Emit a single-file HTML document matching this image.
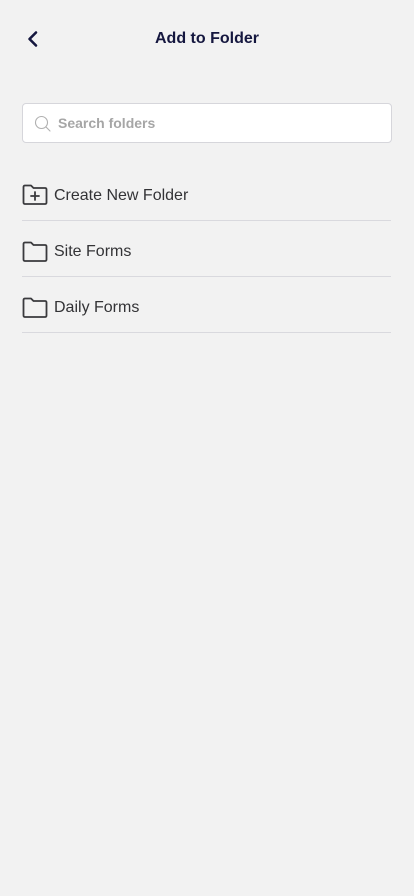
<!DOCTYPE html>
<html><head><meta charset="utf-8">
<style>
*{margin:0;padding:0;box-sizing:border-box}
html,body{width:414px;height:896px;background:#f2f2f2;font-family:"Liberation Sans","DejaVu Sans",sans-serif;overflow:hidden}
.back{position:absolute;left:26px;top:30px}
.title{position:absolute;left:0;right:0;top:30px;text-align:center;font-size:16px;font-weight:bold;color:#15173f;}
.search{position:absolute;left:22px;top:103px;width:370px;height:40px;background:#fff;border:1px solid #d6d6db;border-radius:4px}
.search svg{position:absolute;left:11px;top:11px}
.search span{position:absolute;left:35px;top:11px;font-size:14px;font-weight:bold;color:#a6a6a6}
.row{position:absolute;left:22px;width:369px;height:56px;border-bottom:1px solid #d9d9de}
.row svg{position:absolute;left:0;top:0}
.row span{position:absolute;left:32px;font-size:16px;color:#333336}
</style></head><body>
<svg class="back" width="14" height="18" viewBox="0 0 14 18"><path d="M10 2.5 L3.5 9 L10 15.5" fill="none" stroke="#15173f" stroke-width="2.6" stroke-linecap="round" stroke-linejoin="round"/></svg>
<div class="title">Add to Folder</div>
<div class="search">
<svg width="18" height="18" viewBox="0 0 18 18"><circle cx="7.5" cy="7.5" r="6" fill="none" stroke="#b0b0b0" stroke-width="1.1"/><path d="M12 12 L16 16" stroke="#b0b0b0" stroke-width="1.1" stroke-linecap="round"/></svg>
<span>Search folders</span></div>

<div class="row" style="top:165px">
<svg width="26" height="22" viewBox="0 0 26 22" style="top:19px"><path d="M1.5 3 Q1.5 1.5 3 1.5 H9 L11.5 4 H23 Q24.5 4 24.5 5.5 V18.5 Q24.5 20 23 20 H3 Q1.5 20 1.5 18.5 Z" fill="none" stroke="#3a3a3d" stroke-width="1.8" stroke-linejoin="round"/><path d="M13 8 V16 M9 12 H17" stroke="#3a3a3d" stroke-width="1.8" stroke-linecap="round"/></svg>
<span style="top:22px">Create New Folder</span></div>

<div class="row" style="top:221px">
<svg width="26" height="22" viewBox="0 0 26 22" style="top:20px"><path d="M1.5 3 Q1.5 1.5 3 1.5 H9 L11.5 4 H23 Q24.5 4 24.5 5.5 V18.5 Q24.5 20 23 20 H3 Q1.5 20 1.5 18.5 Z" fill="none" stroke="#3a3a3d" stroke-width="1.8" stroke-linejoin="round"/></svg>
<span style="top:22px">Site Forms</span></div>

<div class="row" style="top:277px">
<svg width="26" height="22" viewBox="0 0 26 22" style="top:20px"><path d="M1.5 3 Q1.5 1.5 3 1.5 H9 L11.5 4 H23 Q24.5 4 24.5 5.5 V18.5 Q24.5 20 23 20 H3 Q1.5 20 1.5 18.5 Z" fill="none" stroke="#3a3a3d" stroke-width="1.8" stroke-linejoin="round"/></svg>
<span style="top:22px">Daily Forms</span></div>
</body></html>
